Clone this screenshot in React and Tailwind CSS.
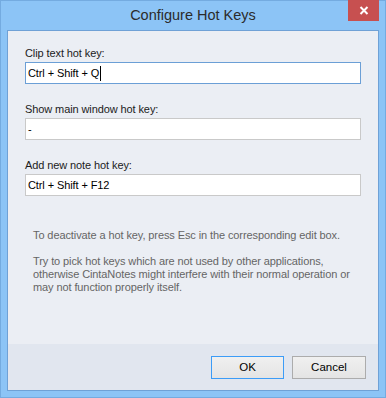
import React from "react";

function Field({ label, value, focused, caret }) {
  return (
    <div className="flex flex-col">
      <div className="h-[14px] leading-[14px] text-[#1b1b1b]">{label}</div>
      <div
        className={`mt-[2px] h-[22px] w-[336px] bg-white border flex items-center pl-[2px] ${
          focused ? "border-[#6b9fd6]" : "border-[#c9c9c9]"
        }`}
      >
        <span className="text-black leading-[14px]">{value}</span>
        {caret && <span className="ml-[1px] w-px h-[15px] bg-black" />}
      </div>
    </div>
  );
}

export default function App() {
  return (
    <div
      className="w-[386px] h-[398px] bg-[#8cc4f6] border border-[#74abe0] flex flex-col text-[11px] tracking-[-0.1px]"
      style={{ fontFamily: '"Liberation Sans", Arial, sans-serif' }}
    >
      <div className="relative h-[29px] flex items-center justify-center">
        <span className="text-[14.5px] tracking-normal text-[#2b2b2b] pt-[1px]">Configure Hot Keys</span>
        <div className="absolute right-[6px] top-[-1px] w-[31px] h-[21px] bg-[#c75050] flex items-center justify-center">
          <svg width="10" height="9" viewBox="0 0 10 9">
            <path d="M1.5 1 L8.5 8 M8.5 1 L1.5 8" stroke="white" strokeWidth="2" />
          </svg>
        </div>
      </div>
      <div className="mx-[6px] h-[361px] border border-[#6fa1d6] bg-[#ebeef4] flex flex-col">
        <div className="flex-1 flex flex-col pl-[17px] pt-[15px]">
          <Field label="Clip text hot key:" value="Ctrl + Shift + Q" focused caret />
          <div className="h-[18px]" />
          <Field label="Show main window hot key:" value="-" />
          <div className="h-[18px]" />
          <Field label="Add new note hot key:" value="Ctrl + Shift + F12" />
          <div className="pl-[8px] pt-[33px] text-[#656565] leading-[13px]">
            <p>To deactivate a hot key, press Esc in the corresponding edit box.</p>
            <p className="mt-[13px]">
              Try to pick hot keys which are not used by other applications,
              <br />
              otherwise CintaNotes might interfere with their normal operation or
              <br />
              may not function properly itself.
            </p>
          </div>
        </div>
        <div className="h-[46px] bg-[#e1e6ef] flex items-start justify-end pt-[12px] pr-[12px] gap-[8px]">
          <button className="w-[73px] h-[23px] border border-[#3c9cf7] bg-gradient-to-b from-[#f0f0f0] to-[#e4e4e4] text-black text-[11.5px] tracking-normal">
            OK
          </button>
          <button className="w-[74px] h-[23px] border border-[#acacac] bg-gradient-to-b from-[#f0f0f0] to-[#e4e4e4] text-black text-[11.5px] tracking-normal">
            Cancel
          </button>
        </div>
      </div>
    </div>
  );
}
